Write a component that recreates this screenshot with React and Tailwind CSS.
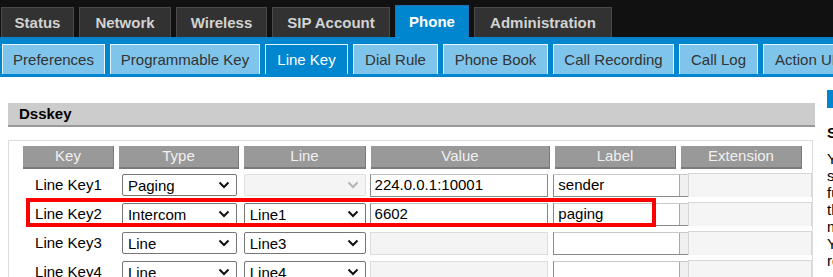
import React from 'react';

const tabs = [
    { name: 'Status', w: 'w-[73px]' },
    { name: 'Network', w: 'w-[92px]' },
    { name: 'Wireless', w: 'w-[91px]' },
    { name: 'SIP Account', w: 'w-[118px]' },
    { name: 'Phone', w: 'w-[74px]', active: true },
    { name: 'Administration', w: 'w-[138px]' },
];

const subTabs = [
    { name: 'Preferences', w: 'w-[103px]' },
    { name: 'Programmable Key', w: 'w-[150px]' },
    { name: 'Line Key', w: 'w-[83px]', active: true },
    { name: 'Dial Rule', w: 'w-[85px]' },
    { name: 'Phone Book', w: 'w-[105px]' },
    { name: 'Call Recording', w: 'w-[121px]' },
    { name: 'Call Log', w: 'w-[79px]' },
    { name: 'Action URL', w: 'w-[100px]' },
];

const rows = [
    { key: 'Line Key1', type: 'Paging', line: '', lineDisabled: true, value: '224.0.0.1:10001', label: 'sender' },
    { key: 'Line Key2', type: 'Intercom', line: 'Line1', value: '6602', label: 'paging' },
    { key: 'Line Key3', type: 'Line', line: 'Line3', valueDisabled: true, label: '' },
    { key: 'Line Key4', type: 'Line', line: 'Line4', valueDisabled: true, label: '' },
];

const Chevron = ({ disabled }) => (
    <svg width="12" height="8" viewBox="0 0 12 8" className="shrink-0">
        <path d="M1.5 1.5 L6 6 L10.5 1.5" fill="none" stroke={disabled ? '#b5b5b5' : '#111'} strokeWidth="2" />
    </svg>
);

const Select = ({ text, disabled, className }) => (
    <div
        className={`h-[22px] flex items-center justify-between pl-[5px] pr-[6px] rounded-[2px] border text-[15px] ${
            disabled ? 'bg-[#f4f4f4] border-[#e0e0e0] text-[#999]' : 'bg-white border-[#767676] text-black'
        } ${className}`}
    >
        <span className="leading-none">{text}</span>
        <Chevron disabled={disabled} />
    </div>
);

export default function App() {
    return (
        <div className="relative w-[833px] h-[277px] overflow-hidden bg-white font-['Liberation_Sans',Arial,sans-serif]">
            {/* top menu */}
            <div className="h-[37px] bg-[#111] flex items-end gap-[5px] pl-[1px]">
                {tabs.map((t) => (
                    <div
                        key={t.name}
                        className={`${t.w} shrink-0 flex items-center justify-center pt-[2px] text-[15px] font-bold border border-b-0 ${
                            t.active
                                ? 'h-[32px] bg-[#0086cf] border-[#1a73b8] text-white'
                                : 'h-[30px] bg-[#323232] border-[#4a4a4a] text-[#d2d2d2]'
                        }`}
                    >
                        {t.name}
                    </div>
                ))}
            </div>

            {/* sub menu */}
            <div className="h-[40px] bg-[#0086cf] flex items-start pt-[7px] pl-[2px] gap-[5px]">
                {subTabs.map((t) => (
                    <div
                        key={t.name}
                        className={`${t.w} shrink-0 h-[30px] flex items-center justify-center pt-[2px] text-[15px] border border-b-0 border-[#e8f4fb] ${
                            t.active ? 'bg-[#0086cf] text-white' : 'bg-[#7fc4ea] text-[#333]'
                        }`}
                    >
                        {t.name}
                    </div>
                ))}
            </div>

            <div className="flex">
                {/* main content */}
                <div className="w-[815px] shrink-0 pl-[8px] pt-[26px]">
                    <div className="h-[24px] bg-[#cccccc] border-b-2 border-[#9a9a9a] flex items-center pl-[11px] text-[15px] font-bold text-black">
                        Dsskey
                    </div>

                    <div className="mt-[13px] w-[805px] border border-[#dcdcdc] pl-[14px] pt-[5px] pb-[10px]">
                        <div className="flex gap-[5px] h-[23px] text-[15px] text-[#f0f0f0]">
                            <div className="w-[91px] bg-[#999] border-b-2 border-r border-[#7a7a7a] flex items-center justify-center">Key</div>
                            <div className="w-[120px] bg-[#999] border-b-2 border-r border-[#7a7a7a] flex items-center justify-center">Type</div>
                            <div className="w-[122px] bg-[#999] border-b-2 border-r border-[#7a7a7a] flex items-center justify-center">Line</div>
                            <div className="w-[179px] bg-[#999] border-b-2 border-r border-[#7a7a7a] flex items-center justify-center">Value</div>
                            <div className="w-[121px] bg-[#999] border-b-2 border-r border-[#7a7a7a] flex items-center justify-center">Label</div>
                            <div className="w-[121px] bg-[#999] border-b-2 border-r border-[#7a7a7a] flex items-center justify-center">Extension</div>
                        </div>

                        <div className="mt-[5px] flex flex-col">
                            {rows.map((r) => (
                                <div key={r.key} className="h-[29px] flex items-start text-[15px]">
                                    <div className="w-[91px] h-[22px] flex items-center justify-center text-black">{r.key}</div>
                                    <div className="w-[5px]" />
                                    <div className="w-[120px] pl-[3px]">
                                        <Select text={r.type} className="w-[115px]" />
                                    </div>
                                    <div className="w-[5px]" />
                                    <Select text={r.line} disabled={r.lineDisabled} className="w-[122px]" />
                                    <div className="w-[4px]" />
                                    <div
                                        className={`w-[179px] h-[23px] flex items-center pl-[4px] border ${
                                            r.valueDisabled ? 'bg-[#f4f4f4] border-[#dcdcdc]' : 'bg-white border-[#8a8a8a] border-t-[#bdbdbd]'
                                        }`}
                                    >
                                        {r.value}
                                    </div>
                                    <div className="w-[5px]" />
                                    <div className="w-[135px] h-[23px] flex bg-white border-l border-b border-t border-[#8a8a8a] border-t-[#c8c8c8]">
                                        <div className="flex-1 flex items-center pl-[4px]">{r.label}</div>
                                        <div className="w-[9px] bg-[#f0f0f0] border-l border-[#a8a8a8]" />
                                    </div>
                                    <div className="w-[124px] h-[24px] -mt-[1px] bg-[#f5f5f5] border-t border-l border-r border-[#d6d6d6]" />
                                </div>
                            ))}
                        </div>
                    </div>
                </div>

                {/* help panel */}
                <div className="ml-[12px] w-[220px] shrink-0 pt-[13px] text-[15px] text-black leading-[17px]">
                    <div className="w-[20px] h-[18px] bg-[#0086cf]" />
                    <div className="mt-[16px] font-bold">Setting</div>
                    <div className="mt-[9px]">You can set the line key</div>
                    <div>settings here, such as the</div>
                    <div>function type, the line and</div>
                    <div>the value for the key.</div>
                    <div>make sure the value is valid.</div>
                    <div>You can also set a label,</div>
                    <div>remark for each key.</div>
                </div>
            </div>

            {/* highlight annotation */}
            <div className="absolute left-[26px] top-[198px] w-[630px] h-[29px] border-4 border-[#ff0000]" />
        </div>
    );
}
